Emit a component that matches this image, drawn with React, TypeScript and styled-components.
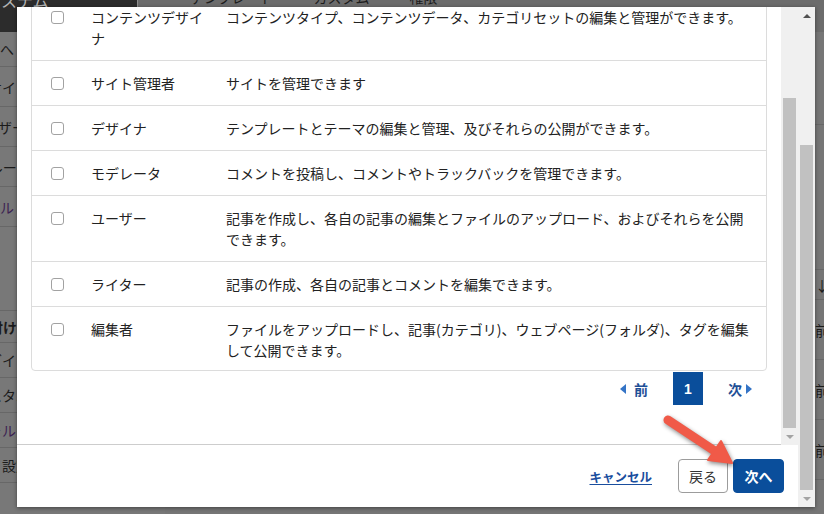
import React from "react";
import styled, { createGlobalStyle } from "styled-components";

const FONT = `"Noto Sans CJK JP", "Noto Sans", "Liberation Sans", sans-serif`;

const GlobalStyle = createGlobalStyle`
  html, body { margin: 0; padding: 0; background: #767676; }
  body { width: 824px; height: 514px; overflow: hidden; font-family: ${FONT}; }
  *, *::before, *::after { box-sizing: border-box; }
`;

const Page = styled.div`
  position: relative;
  width: 824px;
  height: 514px;
  overflow: hidden;
  background: #767676;
  display: flex;
  flex-direction: column;
  font-family: ${FONT};
`;

/* ---------- background admin page (dimmed) ---------- */
const TopBar = styled.header`
  display: flex;
  height: 32px;
  flex-shrink: 0;
`;
const Brand = styled.div`
  width: 138px;
  background: #2c2c2c;
  color: #b4b4b4;
  font-size: 16px;
  line-height: 16px;
  overflow: hidden;
  white-space: nowrap;
  border-right: 1px solid #8e8e8e;
  span {
    display: block;
    margin: -8px 0 0 -15px;
  }
`;
const Tabs = styled.nav`
  flex: 1;
  display: flex;
  gap: 40px;
  padding-left: 52px;
  background: #6c6c6c;
  overflow: hidden;
`;
const Tab = styled.span`
  font-size: 14px;
  line-height: 16px;
  margin-top: -11px;
  color: #1c1c1c;
  white-space: nowrap;
`;
const Content = styled.div`
  flex: 1;
  display: flex;
`;
const Sidebar = styled.aside`
  width: 165px;
  display: flex;
  flex-direction: column;
  background: #787878;
`;
const SideRow = styled.div<{ $h: number }>`
  height: ${(p) => p.$h}px;
  display: flex;
  align-items: center;
  border-bottom: 1px solid #676767;
`;
const SideLabel = styled.span<{ $end: number; $bold?: boolean; $visited?: boolean }>`
  width: ${(p) => p.$end}px;
  display: flex;
  justify-content: flex-end;
  overflow: hidden;
  white-space: nowrap;
  font-size: 14px;
  font-weight: ${(p) => (p.$bold ? 700 : 400)};
  color: ${(p) => (p.$visited ? "#3c2252" : "#1b1b1b")};
`;
const Main = styled.main`
  flex: 1;
  display: flex;
  flex-direction: column;
`;
const MainRow = styled.div<{ $h: number }>`
  height: ${(p) => p.$h}px;
  display: flex;
  align-items: center;
  justify-content: flex-end;
  border-bottom: 1px solid #686868;
`;
const MainCell = styled.span`
  width: 9px;
  overflow: visible;
  white-space: nowrap;
  font-size: 14px;
  color: #1b1b1b;
`;

/* ---------- modal ---------- */
const Modal = styled.div`
  position: absolute;
  left: 17px;
  top: 7px;
  width: 798px;
  height: 500px;
  background: #fff;
  display: flex;
  box-shadow: 0 1px 4px rgba(0, 0, 0, 0.45);
`;
const Frame = styled.div`
  width: 781px;
  display: flex;
  flex-direction: column;
`;
const BodyRow = styled.div`
  height: 438px;
  display: flex;
  flex-shrink: 0;
`;
const Body = styled.div`
  width: 764px;
  height: 438px;
  padding: 0 14px;
  overflow: hidden;
  border-bottom: 1px solid #cdcdcd;
`;
const Table = styled.div`
  margin-top: -13px;
  border: 1px solid #dcdcdc;
  border-radius: 4px;
`;
const Row = styled.div`
  display: grid;
  grid-template-columns: 59px 135px 1fr;
  padding: 11.5px 0;
  border-top: 1px solid #dcdcdc;
  font-size: 14px;
  line-height: 21px;
  color: #222;
  &:first-child {
    border-top: none;
  }
  &:last-child {
    padding-bottom: 9.5px;
  }
`;
const CheckCell = styled.div`
  padding-left: 19px;
`;
const Check = styled.input`
  appearance: none;
  display: block;
  margin: 4px 0 0;
  width: 13px;
  height: 13px;
  border: 1px solid #a2a2a2;
  border-radius: 3px;
  background: #fff;
`;
const NameCell = styled.div`
  padding-right: 16px;
`;
const DescCell = styled.div`
  padding-right: 14px;
`;
const Pager = styled.div`
  margin-top: 1px;
  height: 33px;
  display: flex;
  justify-content: flex-end;
  align-items: center;
  padding-right: 15px;
`;
const PageLink = styled.span<{ $side: "prev" | "next" }>`
  display: flex;
  align-items: center;
  gap: ${(p) => (p.$side === "prev" ? 8 : 4)}px;
  margin: ${(p) => (p.$side === "prev" ? "0 25px 0 0" : "0 0 0 25px")};
  font-size: 14px;
  font-weight: 700;
  color: #1f4f96;
`;
const TriLeft = styled.i`
  width: 0;
  height: 0;
  border-top: 5px solid transparent;
  border-bottom: 5px solid transparent;
  border-right: 6px solid #3474c6;
`;
const TriRight = styled.i`
  width: 0;
  height: 0;
  border-top: 5px solid transparent;
  border-bottom: 5px solid transparent;
  border-left: 6px solid #3474c6;
`;
const PageBox = styled.span`
  width: 30px;
  height: 33px;
  display: flex;
  align-items: center;
  justify-content: center;
  background: #0a4e9b;
  color: #fff;
  font-family: "Liberation Sans", Arial, sans-serif;
  font-size: 14px;
  font-weight: 700;
`;

const Footer = styled.footer`
  flex: 1;
  display: flex;
  justify-content: flex-end;
  align-items: center;
  padding-right: 14px;
`;
const CancelLink = styled.a`
  margin-right: 26px;
  font-size: 12.5px;
  font-weight: 700;
  color: #1a4e9e;
  text-decoration: underline;
  text-underline-offset: 2px;
`;
const Button = styled.button<{ $primary?: boolean }>`
  height: 34px;
  width: ${(p) => (p.$primary ? 51 : 50)}px;
  margin-left: ${(p) => (p.$primary ? 5 : 0)}px;
  padding: 0;
  border-radius: 4px;
  font-family: ${FONT};
  font-size: 14px;
  font-weight: ${(p) => (p.$primary ? 700 : 400)};
  color: ${(p) => (p.$primary ? "#fff" : "#333")};
  background: ${(p) => (p.$primary ? "#0a4e9b" : "#fff")};
  border: 1px solid ${(p) => (p.$primary ? "#0a4e9b" : "#9c9c9c")};
`;

/* ---------- scrollbars ---------- */
const Track = styled.div<{ $top: number }>`
  width: 17px;
  background: #f0f0f0;
  display: flex;
  flex-direction: column;
  padding-top: ${(p) => p.$top}px;
`;
const Thumb = styled.div`
  flex: 1;
  margin: 0 2px;
  background: #c1c1c1;
`;
const ArrowBox = styled.div`
  height: 17px;
  flex-shrink: 0;
  display: flex;
  align-items: center;
  justify-content: center;
`;
const ArrowUp = styled.i`
  width: 0;
  height: 0;
  border-left: 4px solid transparent;
  border-right: 4px solid transparent;
  border-bottom: 4px solid #505050;
`;
const ArrowDown = styled.i`
  width: 0;
  height: 0;
  border-left: 4px solid transparent;
  border-right: 4px solid transparent;
  border-top: 4px solid #a3a3a3;
`;
const Gap = styled.div<{ $h: number }>`
  height: ${(p) => p.$h}px;
  flex-shrink: 0;
`;

const Annotation = styled.svg`
  position: absolute;
  left: 655px;
  top: 408px;
  width: 90px;
  height: 65px;
  overflow: visible;
  pointer-events: none;
  filter: drop-shadow(1px 2px 2px rgba(0, 0, 0, 0.45));
`;

const roles: [string, string][] = [
  ["コンテンツデザイナ", "コンテンツタイプ、コンテンツデータ、カテゴリセットの編集と管理ができます。"],
  ["サイト管理者", "サイトを管理できます"],
  ["デザイナ", "テンプレートとテーマの編集と管理、及びそれらの公開ができます。"],
  ["モデレータ", "コメントを投稿し、コメントやトラックバックを管理できます。"],
  ["ユーザー", "記事を作成し、各自の記事の編集とファイルのアップロード、およびそれらを公開できます。"],
  ["ライター", "記事の作成、各自の記事とコメントを編集できます。"],
  ["編集者", "ファイルをアップロードし、記事(カテゴリ)、ウェブページ(フォルダ)、タグを編集して公開できます。"],
];

const side = [
  { t: "ブログへ", end: 14, h: 35 },
  { t: "ウェブサイト", end: 30, h: 40 },
  { t: "ユーザー", end: 26, h: 40 },
  { t: "グループ", end: 30, h: 40 },
  { t: "ロール", end: 14, h: 40, visited: true },
];
const side2 = [
  { t: "紐付け", end: 17, h: 32, bold: true },
  { t: "プラグイン", end: 30, h: 35 },
  { t: "カスタム", end: 30, h: 35 },
  { t: "フォルダ", end: 30, h: 35, visited: true },
  { t: "設定", end: 30, h: 35 },
];

export default function App() {
  return (
    <>
      <GlobalStyle />
      <Page>
        <TopBar>
          <Brand>
            <span>システム</span>
          </Brand>
          <Tabs>
            <Tab>テンプレート</Tab>
            <Tab>カスタム</Tab>
            <Tab>権限</Tab>
          </Tabs>
        </TopBar>
        <Content>
          <Sidebar>
            {side.map((s) => (
              <SideRow key={s.t} $h={s.h}>
                <SideLabel $end={s.end} $visited={s.visited}>
                  {s.t}
                </SideLabel>
              </SideRow>
            ))}
            <SideRow $h={84} />
            {side2.map((s) => (
              <SideRow key={s.t} $h={s.h}>
                <SideLabel $end={s.end} $bold={s.bold} $visited={s.visited}>
                  {s.t}
                </SideLabel>
              </SideRow>
            ))}
          </Sidebar>
          <Main>
            <MainRow $h={93} />
            <MainRow $h={145} />
            <MainRow $h={30}>
              <MainCell>↓</MainCell>
            </MainRow>
            <MainRow $h={60}>
              <MainCell>前日</MainCell>
            </MainRow>
            <MainRow $h={60}>
              <MainCell>前日</MainCell>
            </MainRow>
            <MainRow $h={60}>
              <MainCell>前日</MainCell>
            </MainRow>
          </Main>
        </Content>

        <Modal>
          <Frame>
            <BodyRow>
              <Body>
                <Table>
                  {roles.map(([name, desc]) => (
                    <Row key={name}>
                      <CheckCell>
                        <Check type="checkbox" />
                      </CheckCell>
                      <NameCell>{name}</NameCell>
                      <DescCell>{desc}</DescCell>
                    </Row>
                  ))}
                </Table>
                <Pager>
                  <PageLink $side="prev">
                    <TriLeft />
                    前
                  </PageLink>
                  <PageBox>1</PageBox>
                  <PageLink $side="next">
                    次
                    <TriRight />
                  </PageLink>
                </Pager>
              </Body>
              <Track $top={91}>
                <Thumb />
                <ArrowBox>
                  <ArrowDown />
                </ArrowBox>
              </Track>
            </BodyRow>
            <Footer>
              <CancelLink>キャンセル</CancelLink>
              <Button>戻る</Button>
              <Button $primary>次へ</Button>
            </Footer>
          </Frame>
          <Track $top={0}>
            <ArrowBox>
              <ArrowUp />
            </ArrowBox>
            <Gap $h={121} />
            <Thumb />
            <ArrowBox>
              <ArrowDown />
            </ArrowBox>
          </Track>
        </Modal>

        <Annotation viewBox="0 0 90 65">
          <line x1="13" y1="12" x2="62" y2="44.5" stroke="#f05a48" strokeWidth="9" strokeLinecap="round" />
          <polygon points="77,55 53,52 66,33" fill="#f05a48" stroke="#f05a48" strokeWidth="2" strokeLinejoin="round" />
        </Annotation>
      </Page>
    </>
  );
}
